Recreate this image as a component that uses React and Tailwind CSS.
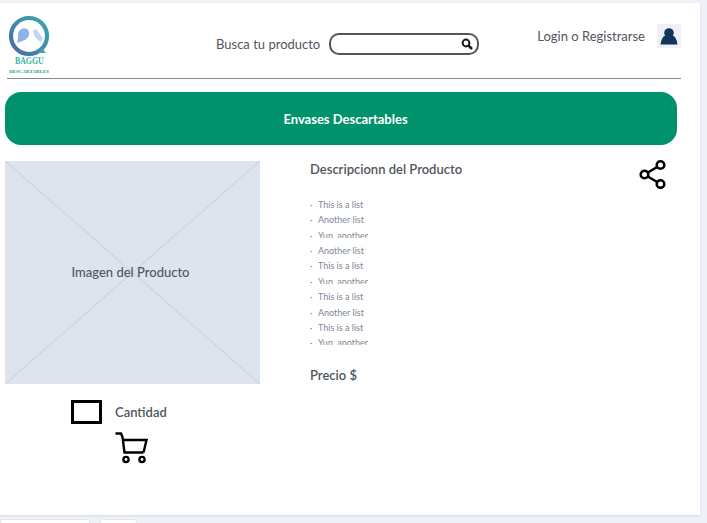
import { useId } from 'react';

const items = [
  ['This is a list', 'h-[15px]'],
  ['Another list', 'h-[11px] mb-[5px]'],
  ['Yun, another', 'h-[10px] mb-[5px]'],
  ['Another list', 'h-[11px] mb-[4px]'],
  ['This is a list', 'h-[16px]'],
  ['Yun, another', 'h-[10px] mb-[5px]'],
  ['This is a list', 'h-[16px]'],
  ['Another list', 'h-[11px] mb-[4px]'],
  ['This is a list', 'h-[11px] mb-[4px]'],
  ['Yun, another', 'h-[10px]'],
];

const Logo = () => {
  const id = useId();
  return (
    <div className="w-[46px] flex flex-col items-center">
      <svg width="42" height="42" viewBox="0 0 42 42" className="block">
        <defs>
          <linearGradient id={id} x1="0" y1="1" x2="1" y2="0">
            <stop offset="0" stopColor="#4668a8" />
            <stop offset="0.5" stopColor="#4787ad" />
            <stop offset="1" stopColor="#37a9ad" />
          </linearGradient>
        </defs>
        <circle cx="21" cy="21" r="18" fill="none" stroke={`url(#${id})`} strokeWidth="4.2" />
        <path d="M9 28 C10 25 10 22 10 19 C11 14 16 12 19 14 C23 17 21 23 17 25 C14 26 12 27 9 28 Z" fill="#8db4e2" />
        <path d="M25 16 L28 14 L35 23 L33 27 C29 25 26 21 25 16 Z" fill="#c2d6f0" />
        <path d="M30 38 L38 38 L34 33 Z" fill="#4a9fb0" />
      </svg>
      <span className="-mt-[1px] text-[10px] leading-[10px] font-bold text-[#2fb5a5] scale-x-[0.78] font-['Liberation_Serif',serif]">BAGGU</span>
      <span className="mt-[3px] text-[5px] leading-[6px] font-bold text-[#1f9c8f] font-['Liberation_Serif',serif] whitespace-nowrap">DESCARTABLES</span>
    </div>
  );
};

const SearchIcon = () => (
  <svg width="12" height="12" viewBox="0 0 12 12" fill="none" stroke="#1b1b1b" strokeWidth="2">
    <circle cx="5" cy="5" r="3.4" />
    <path d="M7.6 7.6 L11 11" strokeWidth="2.6" />
  </svg>
);

const UserIcon = () => (
  <svg width="18" height="17" viewBox="0 0 18 17" fill="#12345b">
    <circle cx="9" cy="5" r="4.8" />
    <path d="M4 8 C2 10 1 13 0.5 16.5 H17.5 C17 13 16 10 14 8 Z" />
  </svg>
);

const ShareIcon = () => (
  <svg width="28" height="30" viewBox="0 0 28 30" fill="none" stroke="#000" strokeWidth="2.6">
    <circle cx="21.5" cy="6" r="3.8" />
    <circle cx="5.5" cy="15.5" r="3.8" />
    <circle cx="21.5" cy="25" r="3.8" />
    <path d="M8.8 13.5 L18.2 8 M8.8 17.5 L18.2 23" />
  </svg>
);

const CartIcon = () => (
  <svg width="33" height="33" viewBox="0 0 33 33" fill="none" stroke="#000" strokeWidth="2.4">
    <path d="M0.5 1.5 H6 L7.5 5 L9.5 20.5 H28.5" />
    <path d="M7.5 8 H31.5 L28.5 20.5" />
    <circle cx="11" cy="27.5" r="2.6" />
    <circle cx="27" cy="27.5" r="2.6" />
  </svg>
);

export default function App() {
  return (
    <div className="w-[707px] h-[523px] overflow-hidden bg-[#eef1f8] pt-[3px] font-['Lato',sans-serif] text-[#50565d]">
      <div className="w-[700px] h-[512px] bg-white shadow-[0_1px_2px_#d5d9e2]">
        {/* header */}
        <header className="ml-[7px] w-[674px] h-[76px] border-b border-[#8a8a8a] flex">
          <div className="-ml-[1px] pt-[12px]">
            <Logo />
          </div>
          <div className="ml-[164px] pt-[30px] flex items-start">
            <span className="text-[13px] leading-[22px] whitespace-nowrap">Busca tu producto</span>
            <div className="ml-[9px] w-[150px] h-[22px] rounded-[10px] border-2 border-[#555] flex items-center justify-end pr-[4px]">
              <SearchIcon />
            </div>
          </div>
          <div className="ml-[58px] pt-[21px] flex items-start">
            <span className="text-[13px] leading-[24px] whitespace-nowrap">Login o Registrarse</span>
            <div className="ml-[12px] w-[24px] h-[24px] bg-[#eef1f5] flex items-center justify-center">
              <UserIcon />
            </div>
          </div>
        </header>

        {/* banner */}
        <div className="ml-[5px] mt-[13px] w-[672px] h-[53px] pl-[9px] pt-[2px] rounded-[16px] bg-[#00926c] flex items-center justify-center text-white text-[13px] font-bold">
          Envases Descartables
        </div>

        <div className="ml-[5px] mt-[16px] flex items-start">
          {/* left column */}
          <div className="w-[255px]">
            <div className="relative h-[223px] pr-[4px] bg-[#dee4ed] flex items-center justify-center">
              <svg className="absolute inset-0" width="255" height="223" viewBox="0 0 255 223">
                <path d="M0 0 L255 223 M255 0 L0 223" stroke="#cdd4df" strokeWidth="1.2" />
              </svg>
              <span className="relative text-[13px] font-medium">Imagen del Producto</span>
            </div>
            <div className="mt-[16px] ml-[66px] flex items-center">
              <div className="w-[31px] h-[24px] border-[3px] border-black" />
              <span className="ml-[13px] pt-[2px] text-[13px] font-semibold">Cantidad</span>
            </div>
            <div className="mt-[8px] ml-[110px]">
              <CartIcon />
            </div>
          </div>

          {/* right column */}
          <div className="ml-[50px] w-[357px] flex items-start justify-between">
            <div>
              <h2 className="text-[13px] leading-[16px] font-semibold">Descripcionn del Producto</h2>
              <ul className="mt-[20px] text-[9px] leading-[15px] text-[#7d8795]">
                {items.map(([text, cls], i) => (
                  <li key={i} className={`flex overflow-hidden ${cls}`}>
                    <span className="w-[8px]">·</span>
                    <span>{text}</span>
                  </li>
                ))}
              </ul>
              <p className="mt-[22px] text-[13px] leading-[16px] font-semibold">Precio $</p>
            </div>
            <div className="-mt-[2px]">
              <ShareIcon />
            </div>
          </div>
        </div>
      </div>

      {/* tabs under the card */}
      <div className="mt-[4px] flex gap-[10px]">
        <div className="w-[90px] h-[10px] bg-white rounded-t-[3px] border border-[#e3e6ed]" />
        <div className="w-[37px] h-[10px] bg-white rounded-t-[3px] border border-[#e3e6ed]" />
      </div>
    </div>
  );
}
